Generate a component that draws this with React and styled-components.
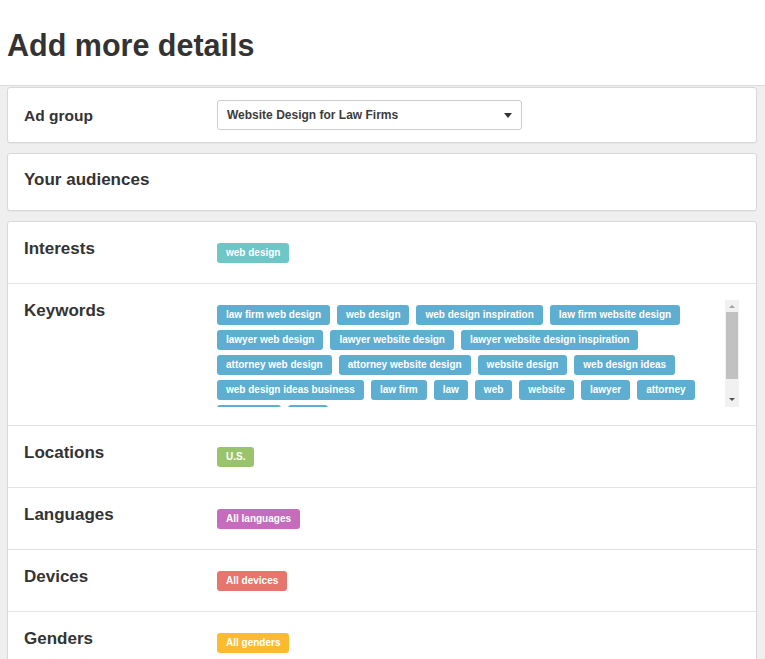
import React from "react";
import styled, { createGlobalStyle } from "styled-components";

const GlobalStyle = createGlobalStyle`
  body {
    margin: 0;
    background: #efefef;
    font-family: "Liberation Sans", Arial, sans-serif;
    color: #333333;
  }
`;

const keywords = [
  "law firm web design",
  "web design",
  "web design inspiration",
  "law firm website design",
  "lawyer web design",
  "lawyer website design",
  "lawyer website design inspiration",
  "attorney web design",
  "attorney website design",
  "website design",
  "web design ideas",
  "web design ideas business",
  "law firm",
  "law",
  "web",
  "website",
  "lawyer",
  "attorney",
  "law office",
  "legal",
];

const details = [
  { label: "Locations", tags: ["U.S."], color: "#9ac46c" },
  { label: "Languages", tags: ["All languages"], color: "#c76cbc" },
  { label: "Devices", tags: ["All devices"], color: "#e7756b" },
  { label: "Genders", tags: ["All genders"], color: "#fbbb2f" },
];

const App = () => {
  return (
    <>
      <GlobalStyle />
      <Header>
        <Title>Add more details</Title>
      </Header>
      <Content>
        <Card height={56}>
          <SelectRow>
            <Label size={15.5}>Ad group</Label>
            <Select>
              <span>Website Design for Law Firms</span>
              <Caret />
            </Select>
          </SelectRow>
        </Card>
        <Card height={58}>
          <AudienceHead>
            <Label>Your audiences</Label>
          </AudienceHead>
        </Card>
        <Card>
          <Row>
            <Label>Interests</Label>
            <Value>
              <Tag color="#6ec6c7">web design</Tag>
            </Value>
          </Row>
          <Row>
            <Label>Keywords</Label>
            <KeywordArea>
              <TagBox>
                {keywords.map((k) => (
                  <Tag key={k} color="#5daed0">
                    {k}
                  </Tag>
                ))}
              </TagBox>
              <Scrollbar>
                <ArrowUp />
                <Thumb />
                <ArrowDown />
              </Scrollbar>
            </KeywordArea>
          </Row>
          {details.map((d) => (
            <Row key={d.label}>
              <Label>{d.label}</Label>
              <Value>
                {d.tags.map((t) => (
                  <Tag key={t} color={d.color}>
                    {t}
                  </Tag>
                ))}
              </Value>
            </Row>
          ))}
        </Card>
      </Content>
    </>
  );
};

export default App;

const Header = styled.header`
  background: #ffffff;
  height: 86px;
  box-sizing: border-box;
  padding: 28px 7px 0;
  border-bottom: 1px solid #dcdcdc;
`;

const Title = styled.h1`
  margin: 0;
  font-size: 30.5px;
  line-height: 34px;
  font-weight: bold;
  color: #333333;
`;

const Content = styled.main`
  display: flex;
  flex-direction: column;
  gap: 10px;
  padding: 1px 8px 0 7px;
`;

const Card = styled.section`
  background: #ffffff;
  border: 1px solid #d8d8d8;
  border-radius: 3px;
  box-shadow: 0 1px 1px rgba(0, 0, 0, 0.04);
  box-sizing: border-box;
  height: ${(p) => (p.height ? `${p.height}px` : "auto")};
`;

const Label = styled.div`
  width: 193px;
  flex-shrink: 0;
  font-size: ${(p) => p.size || 17}px;
  line-height: 21px;
  font-weight: bold;
  color: #333333;
`;

const SelectRow = styled.div`
  display: flex;
  align-items: center;
  height: 100%;
  padding: 0 16px;
`;

const Select = styled.div`
  width: 305px;
  height: 30px;
  box-sizing: border-box;
  border: 1px solid #cccccc;
  border-radius: 3px;
  display: flex;
  align-items: center;
  justify-content: space-between;
  padding: 0 9px;
  font-size: 12px;
  font-weight: bold;
  color: #3c3c3c;
  background: #ffffff;
`;

const Caret = styled.span`
  width: 0;
  height: 0;
  border-left: 4px solid transparent;
  border-right: 4px solid transparent;
  border-top: 5px solid #333333;
`;

const AudienceHead = styled.div`
  padding: 15px 16px 0;
`;

const Row = styled.div`
  display: flex;
  align-items: flex-start;
  padding: 16px 16px 18px;
  border-bottom: 1px solid #e2e2e2;

  &:last-child {
    border-bottom: none;
  }
`;

const Value = styled.div`
  display: flex;
  flex-wrap: wrap;
  padding: 5px 0 2px;
`;

const KeywordArea = styled.div`
  display: flex;
  flex: 1;
  height: 107px;
  padding-right: 1px;
`;

const TagBox = styled.div`
  flex: 1;
  display: flex;
  flex-wrap: wrap;
  align-content: flex-start;
  gap: 5px 7px;
  padding-top: 5px;
  overflow: hidden;
`;

const Tag = styled.span`
  display: inline-block;
  height: 20px;
  line-height: 20px;
  padding: 0 9px;
  border-radius: 3px;
  background: ${(p) => p.color};
  color: #ffffff;
  font-size: 10px;
  font-weight: bold;
  white-space: nowrap;
`;

const Scrollbar = styled.div`
  width: 14px;
  margin-left: 8px;
  background: #f1f1f1;
  display: flex;
  flex-direction: column;
  align-items: center;
`;

const ArrowUp = styled.span`
  margin: 5px 0 4px;
  width: 0;
  height: 0;
  border-left: 3px solid transparent;
  border-right: 3px solid transparent;
  border-bottom: 3px solid #a3a3a3;
`;

const Thumb = styled.div`
  width: 12px;
  height: 67px;
  background: #c1c1c1;
`;

const ArrowDown = styled.span`
  margin-top: auto;
  margin-bottom: 6px;
  width: 0;
  height: 0;
  border-left: 3px solid transparent;
  border-right: 3px solid transparent;
  border-top: 3px solid #505050;
`;
